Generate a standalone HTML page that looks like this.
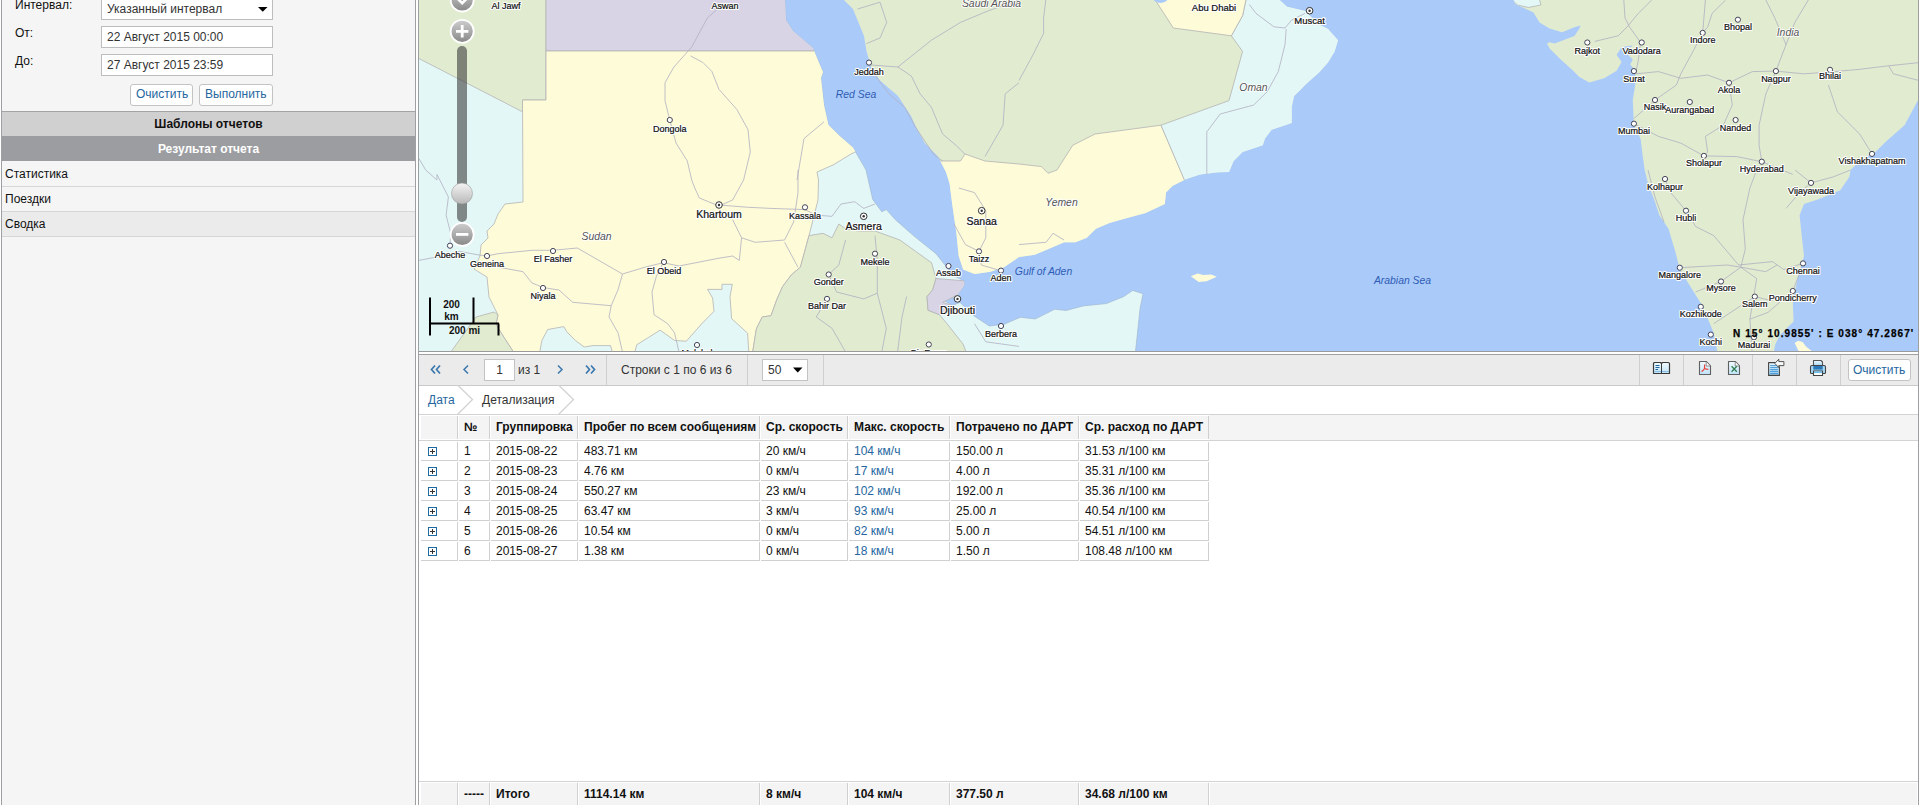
<!DOCTYPE html>
<html><head><meta charset="utf-8">
<style>
*{box-sizing:border-box;margin:0;padding:0}
html,body{width:1919px;height:805px;overflow:hidden;background:#fff;font-family:"Liberation Sans",sans-serif;font-size:12px;color:#111}
.a{position:absolute;white-space:nowrap;line-height:14px}
.box{position:absolute}
.b{font-weight:bold}
.blue{color:#2566a0}
</style></head><body>
<!-- LEFT PANEL -->
<div class="box" style="left:0;top:0;width:416px;height:805px;background:#f5f5f5;border-left:1px solid #9d9fa3;border-right:1px solid #9d9fa3;left:1px;width:415px"></div>
<div class="a" style="left:15px;top:-2px">Интервал:</div>
<div class="box" style="left:101px;top:-2px;width:172px;height:22px;background:#fff;border:1px solid #bdbdbd"></div>
<div class="a" style="left:107px;top:2px;color:#333">Указанный интервал</div>
<svg class="box" style="left:258px;top:7px" width="10" height="5"><path d="M0 0H9.5L4.75 4.8Z" fill="#000"/></svg>
<div class="a" style="left:15px;top:26px">От:</div>
<div class="box" style="left:101px;top:26px;width:172px;height:22px;background:#fff;border:1px solid #bdbdbd"></div>
<div class="a" style="left:107px;top:30px;color:#333">22 Август 2015 00:00</div>
<div class="a" style="left:15px;top:54px">До:</div>
<div class="box" style="left:101px;top:54px;width:172px;height:22px;background:#fff;border:1px solid #bdbdbd"></div>
<div class="a" style="left:107px;top:58px;color:#333">27 Август 2015 23:59</div>
<div class="box" style="left:130px;top:84px;width:63px;height:22px;background:#fff;border:1px solid #c3c3c3;border-radius:3px"></div>
<div class="a blue" style="left:136px;top:87px">Очистить</div>
<div class="box" style="left:199px;top:84px;width:74px;height:22px;background:#fff;border:1px solid #c3c3c3;border-radius:3px"></div>
<div class="a blue" style="left:205px;top:87px">Выполнить</div>
<div class="box" style="left:2px;top:111px;width:413px;height:1px;background:#a3a3a3"></div>
<div class="box" style="left:2px;top:112px;width:413px;height:24px;background:#d1d0d1"></div>
<div class="a b" style="left:2px;width:413px;text-align:center;top:117px">Шаблоны отчетов</div>
<div class="box" style="left:2px;top:136px;width:413px;height:25px;background:#9c9da1"></div>
<div class="a b" style="left:2px;width:413px;text-align:center;top:142px;color:#fff">Результат отчета</div>
<div class="box" style="left:2px;top:161px;width:413px;height:26px;border-bottom:1px solid #d6d6d6"></div>
<div class="a" style="left:5px;top:167px">Статистика</div>
<div class="box" style="left:2px;top:187px;width:413px;height:25px;border-bottom:1px solid #d6d6d6"></div>
<div class="a" style="left:5px;top:192px">Поездки</div>
<div class="box" style="left:2px;top:212px;width:413px;height:25px;background:#ebebeb;border-bottom:1px solid #d6d6d6"></div>
<div class="a" style="left:5px;top:217px">Сводка</div>

<!-- RIGHT PANEL BORDER -->
<div class="box" style="left:418px;top:0;width:1px;height:805px;background:#9d9fa3"></div>
<div class="box" style="left:1918px;top:0px;width:1px;height:805px;background:#9d9fa3"></div>

<!-- MAP -->
<div class="box" id="map" style="left:419px;top:0;width:1499px;height:351px;background:#aacbfa;overflow:hidden">
<svg width="1500" height="351" viewBox="0 0 1500 351" style="position:absolute;left:0;top:0">
<defs>
<clipPath id="cAf"><path d="M-5.0 -5.0 L366.0 -5.0 L366.0 0.0 L367.0 20.0 L374.0 31.0 L394.0 48.0 L398.0 58.0 L404.0 72.0 L402.0 78.0 L405.0 105.0 L409.5 125.0 L420.7 136.0 L434.0 147.5 L443.0 163.0 L447.0 170.0 L453.7 199.4 L462.8 211.8 L467.3 209.6 L476.4 219.7 L494.4 235.6 L517.0 253.7 L526.0 265.0 L535.0 276.0 L545.0 280.8 L545.3 285.3 L537.4 296.6 L526.0 301.0 L533.0 305.6 L541.0 302.4 L555.4 316.2 L570.3 326.0 L585.2 324.2 L601.3 317.3 L616.2 319.0 L635.7 309.3 L647.1 310.5 L664.3 305.9 L687.3 303.6 L704.5 296.7 L713.7 290.4 L724.0 293.8 L721.1 308.2 L716.0 356.0 L-5.0 356.0 Z"/></clipPath>
<clipPath id="cAr"><path d="M425.0 -5.0 L425.0 0.0 L434.0 9.0 L445.0 36.0 L447.5 51.0 L452.0 67.0 L461.0 80.5 L479.0 96.0 L492.0 116.0 L497.0 127.0 L505.7 143.0 L519.0 156.5 L527.0 172.0 L530.6 183.6 L532.9 201.7 L537.4 233.3 L539.7 256.0 L544.2 269.5 L555.5 274.0 L571.3 271.7 L585.0 267.2 L600.0 257.0 L615.8 254.8 L629.4 249.1 L645.2 242.3 L656.5 242.3 L667.8 237.8 L676.9 228.8 L690.4 223.0 L706.3 218.6 L726.6 213.0 L745.8 204.0 L747.0 192.6 L753.7 185.8 L767.3 179.0 L781.0 174.5 L799.0 172.3 L810.0 172.0 L814.6 161.0 L823.6 152.0 L843.7 145.3 L846.0 138.6 L852.6 129.7 L872.7 123.0 L872.7 107.3 L875.0 96.0 L881.7 89.4 L886.0 85.0 L900.0 72.5 L909.0 62.6 L915.6 51.4 L919.0 40.2 L909.0 29.0 L900.0 24.6 L886.0 11.0 L868.0 6.7 L855.0 -5.0 Z"/></clipPath>
<clipPath id="cIn"><path d="M1092.3 -5.0 L1505.0 -5.0 L1505.0 98.4 L1500.0 98.4 L1485.5 125.2 L1467.6 141.0 L1456.4 152.0 L1440.8 161.0 L1431.5 170.0 L1430.4 176.8 L1421.3 190.3 L1398.7 199.4 L1385.0 204.0 L1380.6 215.2 L1382.9 237.8 L1385.0 256.0 L1378.4 278.5 L1373.8 303.4 L1374.6 321.4 L1367.8 328.3 L1361.0 335.0 L1356.3 344.2 L1354.0 356.0 L1299.2 356.0 L1294.7 332.8 L1283.4 305.7 L1272.0 287.6 L1260.8 269.5 L1256.3 251.4 L1249.5 228.8 L1240.4 215.2 L1236.0 201.7 L1229.0 183.6 L1225.7 170.0 L1223.8 156.6 L1221.6 138.7 L1214.9 125.2 L1213.8 100.0 L1216.3 84.5 L1216.3 70.8 L1211.3 64.6 L1213.8 59.6 L1208.8 54.7 L1210.0 48.4 L1213.8 45.3 L1202.6 47.2 L1197.6 54.7 L1202.6 62.1 L1197.6 70.8 L1185.2 78.3 L1170.3 82.6 L1160.4 77.0 L1152.9 69.6 L1141.7 59.6 L1130.6 48.4 L1128.0 43.5 L1130.6 42.2 L1135.5 43.5 L1145.5 39.8 L1155.4 36.0 L1160.4 28.6 L1161.6 25.5 L1155.4 27.3 L1143.0 32.3 L1130.6 28.6 L1120.6 22.4 L1114.4 12.4 L1105.0 8.0 L1096.7 4.5 Z"/></clipPath>
<linearGradient id="zb" x1="0" y1="0" x2="0" y2="1"><stop offset="0" stop-color="#cfcfcf"/><stop offset="1" stop-color="#878787"/></linearGradient>
<linearGradient id="kn" x1="0" y1="0" x2="0" y2="1"><stop offset="0" stop-color="#f4f4f4"/><stop offset="1" stop-color="#b8b8b8"/></linearGradient>
</defs>
<rect width="1500" height="351" fill="#aacbfa"/>
<path d="M-5.0 -5.0 L366.0 -5.0 L366.0 0.0 L367.0 20.0 L374.0 31.0 L394.0 48.0 L398.0 58.0 L404.0 72.0 L402.0 78.0 L405.0 105.0 L409.5 125.0 L420.7 136.0 L434.0 147.5 L443.0 163.0 L447.0 170.0 L453.7 199.4 L462.8 211.8 L467.3 209.6 L476.4 219.7 L494.4 235.6 L517.0 253.7 L526.0 265.0 L535.0 276.0 L545.0 280.8 L545.3 285.3 L537.4 296.6 L526.0 301.0 L533.0 305.6 L541.0 302.4 L555.4 316.2 L570.3 326.0 L585.2 324.2 L601.3 317.3 L616.2 319.0 L635.7 309.3 L647.1 310.5 L664.3 305.9 L687.3 303.6 L704.5 296.7 L713.7 290.4 L724.0 293.8 L721.1 308.2 L716.0 356.0 L-5.0 356.0 Z" fill="#e4f7f7" stroke="#9db3c8" stroke-width="0.6"/>
<g clip-path="url(#cAf)">
<path d="M-5.0 -5.0 L127.0 -5.0 L127.0 100.0 L103.5 100.0 L103.5 111.8 L-5.0 56.0 Z" fill="#e1ebd0" stroke="#b4b4b4" stroke-width="0.8"/>
<path d="M127.0 -5.0 L400.0 -5.0 L400.0 51.0 L127.0 51.0 Z" fill="#d8d4e6" stroke="#b4b4b4" stroke-width="0.8"/>
<path d="M103.5 100.0 L127.0 100.0 L127.0 51.0 L400.0 51.0 L440.0 150.0 L432.0 154.0 L414.0 165.0 L398.0 172.0 L399.5 180.0 L399.0 200.0 L390.0 235.6 L381.4 267.2 L372.4 274.8 L363.6 286.5 L357.8 299.6 L352.0 315.7 L343.2 317.0 L337.4 328.8 L333.0 356.0 L97.0 356.0 L79.0 328.0 L77.0 324.0 L79.0 315.0 L70.0 297.0 L68.0 277.0 L55.0 269.0 L61.0 256.0 L62.0 245.0 L69.0 238.0 L68.0 231.0 L75.0 224.0 L79.0 214.0 L86.0 204.0 L104.0 202.0 Z" fill="#fefbd8" stroke="#b4b4b4" stroke-width="0.8"/>
<path d="M120.0 356.0 L122.9 340.5 L128.7 329.5 L144.8 326.6 L147.7 331.7 L156.4 340.5 L165.2 347.0 L174.0 345.6 L191.5 345.6 L194.4 356.0 Z" fill="#e4f7f7" stroke="#b4b4b4" stroke-width="0.8"/>
<path d="M214.8 356.0 L217.7 344.8 L229.4 337.5 L241.0 330.2 L255.7 340.5 L267.3 341.2 L283.4 323.0 L295.0 311.3 L293.6 298.0 L288.5 289.4 L303.0 289.4 L303.0 284.3 L313.3 284.3 L311.0 296.7 L312.6 318.6 L328.6 333.2 L330.0 356.0 Z" fill="#e4f7f7" stroke="#b4b4b4" stroke-width="0.8"/>
<path d="M29.0 356.0 L57.0 317.0 L75.0 312.0 L79.0 315.0 L77.0 324.0 L79.0 328.0 L97.0 356.0 Z" fill="#e1ebd0" stroke="#b4b4b4" stroke-width="0.8"/>
<path d="M390.0 235.6 L404.0 233.3 L413.0 237.8 L419.8 224.0 L426.6 228.8 L440.0 231.0 L456.0 231.0 L480.9 240.0 L496.7 251.4 L512.5 262.7 L517.0 278.5 L513.7 289.8 L508.0 296.6 L509.0 310.2 L520.4 314.7 L528.0 323.7 L544.0 344.0 L548.7 356.0 L333.0 356.0 L337.4 328.8 L343.2 317.0 L352.0 315.7 L357.8 299.6 L363.6 286.5 L372.4 274.8 L381.4 267.2 Z" fill="#e1ebd0" stroke="#b4b4b4" stroke-width="0.8"/>
<path d="M517.0 278.5 L545.3 280.8 L560.0 286.4 L535.0 296.6 L523.8 302.3 L533.0 305.6 L539.7 310.2 L520.4 314.7 L509.0 310.2 L508.0 296.6 L513.7 289.8 Z" fill="#d8d4e6" stroke="#b4b4b4" stroke-width="0.8"/>
</g>
<path d="M425.0 -5.0 L425.0 0.0 L434.0 9.0 L445.0 36.0 L447.5 51.0 L452.0 67.0 L461.0 80.5 L479.0 96.0 L492.0 116.0 L497.0 127.0 L505.7 143.0 L519.0 156.5 L527.0 172.0 L530.6 183.6 L532.9 201.7 L537.4 233.3 L539.7 256.0 L544.2 269.5 L555.5 274.0 L571.3 271.7 L585.0 267.2 L600.0 257.0 L615.8 254.8 L629.4 249.1 L645.2 242.3 L656.5 242.3 L667.8 237.8 L676.9 228.8 L690.4 223.0 L706.3 218.6 L726.6 213.0 L745.8 204.0 L747.0 192.6 L753.7 185.8 L767.3 179.0 L781.0 174.5 L799.0 172.3 L810.0 172.0 L814.6 161.0 L823.6 152.0 L843.7 145.3 L846.0 138.6 L852.6 129.7 L872.7 123.0 L872.7 107.3 L875.0 96.0 L881.7 89.4 L886.0 85.0 L900.0 72.5 L909.0 62.6 L915.6 51.4 L919.0 40.2 L909.0 29.0 L900.0 24.6 L886.0 11.0 L868.0 6.7 L855.0 -5.0 Z" fill="#e1ebd0"/>
<g clip-path="url(#cAr)">
<path d="M480.0 161.0 L541.5 161.0 L546.0 154.0 L566.0 161.0 L600.0 164.0 L622.4 166.6 L629.0 173.3 L638.0 170.0 L653.7 145.3 L676.0 134.0 L742.0 125.2 L770.0 190.0 L770.0 320.0 L480.0 320.0 Z" fill="#fefbd8" stroke="#b4b4b4" stroke-width="0.8"/>
<path d="M742.0 125.2 L810.0 100.6 L823.6 51.4 L812.4 35.8 L823.6 15.6 L828.0 -5.0 L950.0 -5.0 L950.0 220.0 L770.0 220.0 L765.4 180.0 Z" fill="#e4f7f7" stroke="#b4b4b4" stroke-width="0.8"/>
<path d="M733.0 -5.0 L754.3 28.0 L812.4 35.8 L823.6 15.6 L828.0 -5.0 Z" fill="#fefbd8" stroke="#b4b4b4" stroke-width="0.8"/>
</g>
<path d="M1092.3 -5.0 L1505.0 -5.0 L1505.0 98.4 L1500.0 98.4 L1485.5 125.2 L1467.6 141.0 L1456.4 152.0 L1440.8 161.0 L1431.5 170.0 L1430.4 176.8 L1421.3 190.3 L1398.7 199.4 L1385.0 204.0 L1380.6 215.2 L1382.9 237.8 L1385.0 256.0 L1378.4 278.5 L1373.8 303.4 L1374.6 321.4 L1367.8 328.3 L1361.0 335.0 L1356.3 344.2 L1354.0 356.0 L1299.2 356.0 L1294.7 332.8 L1283.4 305.7 L1272.0 287.6 L1260.8 269.5 L1256.3 251.4 L1249.5 228.8 L1240.4 215.2 L1236.0 201.7 L1229.0 183.6 L1225.7 170.0 L1223.8 156.6 L1221.6 138.7 L1214.9 125.2 L1213.8 100.0 L1216.3 84.5 L1216.3 70.8 L1211.3 64.6 L1213.8 59.6 L1208.8 54.7 L1210.0 48.4 L1213.8 45.3 L1202.6 47.2 L1197.6 54.7 L1202.6 62.1 L1197.6 70.8 L1185.2 78.3 L1170.3 82.6 L1160.4 77.0 L1152.9 69.6 L1141.7 59.6 L1130.6 48.4 L1128.0 43.5 L1130.6 42.2 L1135.5 43.5 L1145.5 39.8 L1155.4 36.0 L1160.4 28.6 L1161.6 25.5 L1155.4 27.3 L1143.0 32.3 L1130.6 28.6 L1120.6 22.4 L1114.4 12.4 L1105.0 8.0 L1096.7 4.5 Z" fill="#e1ebd0"/>
<g clip-path="url(#cIn)">
<path d="M1085.0 -5.0 L1093.3 -5.0 L1093.3 0.0 L1098.3 5.0 L1109.4 7.5 L1121.9 5.0 L1120.6 0.0 L1120.6 -5.0 Z" fill="#e4f7f7" stroke="#b4b4b4" stroke-width="0.8"/>
</g>
<path d="M733 -2 Q736 3 742 3 Q748 2 750 -2 Z" fill="#aacbfa"/>
<path d="M771.8 276.3 L778.6 273.5 L784.3 275.0 L792.2 274.5 L797.8 276.7 L787.7 281.2 L779.7 282.0 Z" fill="#fefbd8"/>
<path d="M1375.7 343.0 L1379.0 340.8 L1383.7 342.0 L1387.0 346.5 L1394.0 352.0 L1380.0 352.0 Z" fill="#fefbd8"/>
<g fill="none" stroke="#b0b0c0" stroke-width="0.8">
<path d="M300.0 7.8 L288.4 17.9 L272.7 47.0 L254.9 67.0 L246.0 82.7 L246.0 100.6 L250.4 118.5 L257.0 143.0 L268.3 161.0 L272.7 180.0 L275.8 188.0 L280.4 198.0 L289.4 201.7 L300.0 206.0"/>
<path d="M271.6 55.9 L284.0 62.6 L292.9 71.5 L300.0 89.4 L317.9 109.5 L329.0 129.7 L331.3 152.0 L324.6 180.0 L313.6 200.0 L300.0 206.0"/>
<path d="M0.0 158.7 L6.7 170.0 L17.9 180.0 L18.0 174.5"/>
<path d="M378.0 180.0 L385.0 138.6 L405.0 121.8"/>
<path d="M438.6 9.0 L461.0 2.2 L467.7 22.4 L461.0 38.0 L447.5 43.6"/>
<path d="M449.8 64.8 L478.9 67.0 L492.3 76.0 L501.2 93.9 L512.4 107.3 L523.6 134.0 L537.0 145.3 L546.0 154.3"/>
<path d="M478.9 67.0 L512.4 40.2 L541.5 22.4 L568.3 11.2 L600.0 0.0"/>
<path d="M600.0 82.7 L586.2 93.9 L584.0 125.2 L566.0 156.5"/>
<path d="M456.5 76.0 L470.0 93.9 L485.6 107.3 L496.7 127.4 L514.6 154.3 L523.6 161.0"/>
<path d="M18.0 174.5 L29.4 197.0 L27.1 215.2 L31.7 233.3 L31.0 245.0"/>
<path d="M0.0 260.4 L22.6 256.0 L40.7 251.4 L58.8 254.8 L67.8 256.0 L79.0 253.7 L113.0 250.3 L133.4 250.3 L158.3 248.0 L203.5 274.0 L226.0 267.2 L244.2 262.7 L260.0 266.0 L300.0 258.2 L313.6 256.0 L320.3 260.4 L322.6 237.8"/>
<path d="M67.8 265.0 L104.0 271.7 L113.0 283.0 L124.4 287.6 L140.0 290.0 L153.7 302.3 L192.2 305.7"/>
<path d="M203.5 274.0 L199.0 289.8 L192.2 305.7 L190.0 317.0 L199.0 332.8 L203.5 352.0"/>
<path d="M244.2 262.7 L237.4 276.3 L233.0 292.0 L235.0 314.7 L248.7 323.7 L255.5 332.8 L260.0 352.0"/>
<path d="M300.0 205.0 L329.4 207.3 L352.0 208.4 L386.0 209.6 L397.2 215.2 L413.0 216.3 L422.0 204.0 L435.7 201.7 L444.7 208.4 L456.0 204.0"/>
<path d="M313.6 219.7 L322.6 237.8 L336.2 242.3 L365.6 240.0 L374.6 222.0 L379.0 192.6 L379.0 170.0"/>
<path d="M365.6 242.3 L379.0 267.2"/>
<path d="M426.6 240.0 L419.8 265.0 L409.7 274.5 L417.6 292.0 L444.7 298.9 L458.3 293.2"/>
<path d="M456.0 235.6 L458.3 260.4 L458.3 293.2 L467.3 328.3 L462.8 352.0"/>
<path d="M408.0 298.9 L397.2 317.0 L413.0 328.3 L426.6 352.0"/>
<path d="M487.6 296.6 L483.0 317.0 L478.6 352.0"/>
<path d="M539.7 188.0 L555.5 192.6 L566.8 210.7 L566.8 237.8 L560.0 251.4 L562.3 265.0 L585.0 271.7"/>
<path d="M535.0 224.0 L546.4 244.6 L560.0 251.4"/>
<path d="M555.5 323.7 L566.8 341.8 L600.0 346.4"/>
<path d="M626.8 0.0 L624.6 17.9 L624.6 33.5 L613.4 55.9 L600.0 80.5"/>
<path d="M830.3 4.5 L837.0 13.4 L854.9 26.8 L866.0 28.0 L872.7 20.0 L886.0 13.4"/>
<path d="M867.2 29.0 L866.0 44.7 L859.3 71.5 L848.2 91.7 L834.7 105.0 L801.2 114.0 L787.8 131.9 L787.8 174.4"/>
<path d="M600.0 244.6 L627.0 242.3 L634.0 233.3 L645.0 240.0"/>
<path d="M1175.7 41.4 L1199.2 35.8 L1208.2 26.8 L1219.3 13.4 L1232.8 0.0"/>
<path d="M1204.8 0.0 L1206.0 17.9 L1210.4 26.8 L1221.6 42.5 L1219.3 60.4 L1217.0 71.6"/>
<path d="M1217.0 73.8 L1239.5 71.6 L1261.8 78.3 L1288.7 75.0 L1310.0 82.8 L1333.4 71.6 L1356.9 71.1 L1384.8 73.8 L1411.0 72.0 L1440.8 69.3 L1467.6 66.0 L1500.0 62.6"/>
<path d="M1286.4 0.0 L1283.7 32.9 L1275.2 49.2 L1261.8 73.8 L1257.4 85.0 L1236.0 100.0 L1214.9 118.5"/>
<path d="M1306.6 0.0 L1293.1 13.4 L1288.7 26.8 L1283.7 32.9"/>
<path d="M1346.8 0.0 L1355.8 17.9 L1367.0 44.7 L1356.9 71.1 L1346.8 94.0 L1340.1 125.2 L1340.1 145.4 L1342.8 161.7"/>
<path d="M1389.3 0.0 L1375.9 22.4 L1367.0 44.7"/>
<path d="M1310.0 82.8 L1313.3 105.0 L1304.3 125.2 L1286.4 136.4 L1288.7 152.0 L1284.9 155.9"/>
<path d="M1214.9 123.7 L1239.5 136.4 L1261.8 143.1 L1284.9 155.9 L1317.7 156.6 L1342.8 161.7 L1373.7 174.4"/>
<path d="M1409.4 85.0 L1418.4 111.8 L1440.8 134.2 L1453.0 153.9"/>
<path d="M1469.8 66.0 L1474.3 73.8 L1500.0 80.5"/>
<path d="M1337.7 170.0 L1330.9 188.0 L1324.0 219.7 L1326.3 249.1 L1321.8 267.2 L1337.7 278.5 L1330.9 319.2 L1333.1 352.0"/>
<path d="M1266.9 210.7 L1276.6 226.5 L1294.7 235.6 L1319.6 265.0 L1353.5 261.6 L1364.8 269.5 L1384.0 263.4"/>
<path d="M1260.8 267.7 L1308.3 265.0 L1321.8 267.2"/>
<path d="M1276.6 292.0 L1302.0 281.5 L1321.8 267.2 L1346.7 271.7 L1358.0 265.0"/>
<path d="M1294.7 323.7 L1321.8 305.7 L1335.8 296.6 L1353.5 301.0"/>
<path d="M1382.9 267.2 L1373.8 291.0 L1349.0 312.4 L1330.9 319.2"/>
<path d="M1246.0 179.0 L1251.7 192.6 L1266.9 210.7"/>
<path d="M1229.0 170.0 L1236.0 197.0 L1245.0 222.0"/>
<path d="M1392.0 182.9 L1380.6 192.6 L1367.0 208.4"/>
<path d="M1376.0 170.0 L1392.0 182.9 L1414.5 176.8 L1431.5 170.0"/>
</g>
<g>
<circle cx="250.8" cy="120" r="2.6" fill="#fff" stroke="#444458" stroke-width="1"/>
<circle cx="300" cy="205" r="3.3" fill="#fff" stroke="#333" stroke-width="1"/><circle cx="300" cy="205" r="1.2" fill="#333"/>
<circle cx="386" cy="207.3" r="2.6" fill="#fff" stroke="#444458" stroke-width="1"/>
<circle cx="444.7" cy="216.3" r="3.3" fill="#fff" stroke="#333" stroke-width="1"/><circle cx="444.7" cy="216.3" r="1.2" fill="#333"/>
<circle cx="456" cy="253.7" r="2.6" fill="#fff" stroke="#444458" stroke-width="1"/>
<circle cx="409.7" cy="274.5" r="2.6" fill="#fff" stroke="#444458" stroke-width="1"/>
<circle cx="408" cy="298.9" r="2.6" fill="#fff" stroke="#444458" stroke-width="1"/>
<circle cx="529.5" cy="266" r="2.6" fill="#fff" stroke="#444458" stroke-width="1"/>
<circle cx="538.5" cy="298.9" r="3.3" fill="#fff" stroke="#333" stroke-width="1"/><circle cx="538.5" cy="298.9" r="1.2" fill="#333"/>
<circle cx="562.7" cy="210.7" r="3.3" fill="#fff" stroke="#333" stroke-width="1"/><circle cx="562.7" cy="210.7" r="1.2" fill="#333"/>
<circle cx="560" cy="251.4" r="2.6" fill="#fff" stroke="#444458" stroke-width="1"/>
<circle cx="582" cy="270.6" r="2.6" fill="#fff" stroke="#444458" stroke-width="1"/>
<circle cx="582" cy="326" r="2.6" fill="#fff" stroke="#444458" stroke-width="1"/>
<circle cx="450" cy="62.6" r="2.6" fill="#fff" stroke="#444458" stroke-width="1"/>
<circle cx="31" cy="245.7" r="2.6" fill="#fff" stroke="#444458" stroke-width="1"/>
<circle cx="68" cy="256" r="2.6" fill="#fff" stroke="#444458" stroke-width="1"/>
<circle cx="134" cy="251" r="2.6" fill="#fff" stroke="#444458" stroke-width="1"/>
<circle cx="124" cy="288" r="2.6" fill="#fff" stroke="#444458" stroke-width="1"/>
<circle cx="245" cy="262" r="2.6" fill="#fff" stroke="#444458" stroke-width="1"/>
<circle cx="890.6" cy="10.7" r="3.3" fill="#fff" stroke="#333" stroke-width="1"/><circle cx="890.6" cy="10.7" r="1.2" fill="#333"/>
<circle cx="1168.3" cy="42.5" r="2.6" fill="#fff" stroke="#444458" stroke-width="1"/>
<circle cx="1222.7" cy="42.5" r="2.6" fill="#fff" stroke="#444458" stroke-width="1"/>
<circle cx="1283.7" cy="32.9" r="2.6" fill="#fff" stroke="#444458" stroke-width="1"/>
<circle cx="1318.9" cy="19.7" r="2.6" fill="#fff" stroke="#444458" stroke-width="1"/>
<circle cx="1214.9" cy="71.1" r="2.6" fill="#fff" stroke="#444458" stroke-width="1"/>
<circle cx="1310" cy="82.8" r="2.6" fill="#fff" stroke="#444458" stroke-width="1"/>
<circle cx="1356.9" cy="71.1" r="2.6" fill="#fff" stroke="#444458" stroke-width="1"/>
<circle cx="1411" cy="69.8" r="2.6" fill="#fff" stroke="#444458" stroke-width="1"/>
<circle cx="1236" cy="100" r="2.6" fill="#fff" stroke="#444458" stroke-width="1"/>
<circle cx="1270.8" cy="102" r="2.6" fill="#fff" stroke="#444458" stroke-width="1"/>
<circle cx="1316.6" cy="120" r="2.6" fill="#fff" stroke="#444458" stroke-width="1"/>
<circle cx="1214.9" cy="123.7" r="2.6" fill="#fff" stroke="#444458" stroke-width="1"/>
<circle cx="1284.9" cy="155.9" r="2.6" fill="#fff" stroke="#444458" stroke-width="1"/>
<circle cx="1342.8" cy="161.7" r="2.6" fill="#fff" stroke="#444458" stroke-width="1"/>
<circle cx="1453" cy="153.9" r="2.6" fill="#fff" stroke="#444458" stroke-width="1"/>
<circle cx="1246" cy="179" r="2.6" fill="#fff" stroke="#444458" stroke-width="1"/>
<circle cx="1392" cy="182.9" r="2.6" fill="#fff" stroke="#444458" stroke-width="1"/>
<circle cx="1267" cy="210.7" r="2.6" fill="#fff" stroke="#444458" stroke-width="1"/>
<circle cx="1260.8" cy="267.7" r="2.6" fill="#fff" stroke="#444458" stroke-width="1"/>
<circle cx="1384" cy="263.4" r="2.6" fill="#fff" stroke="#444458" stroke-width="1"/>
<circle cx="1302" cy="281.5" r="2.6" fill="#fff" stroke="#444458" stroke-width="1"/>
<circle cx="1373.8" cy="291" r="2.6" fill="#fff" stroke="#444458" stroke-width="1"/>
<circle cx="1335.8" cy="296.6" r="2.6" fill="#fff" stroke="#444458" stroke-width="1"/>
<circle cx="1281.8" cy="306.8" r="2.6" fill="#fff" stroke="#444458" stroke-width="1"/>
<circle cx="1291.8" cy="334.6" r="2.6" fill="#fff" stroke="#444458" stroke-width="1"/>
<circle cx="1335" cy="337.3" r="2.6" fill="#fff" stroke="#444458" stroke-width="1"/>
<circle cx="509.8" cy="344.5" r="2.6" fill="#fff" stroke="#444458" stroke-width="1"/>
<circle cx="278" cy="345" r="2.6" fill="#fff" stroke="#444458" stroke-width="1"/>
</g>
<g font-family="Liberation Sans" fill="#fff" stroke="#fff" stroke-width="2.2" stroke-linejoin="round" text-anchor="middle">
<text x="250.8" y="131.6" font-size="9">Dongola</text>
<text x="300" y="218.1" font-size="10.5">Khartoum</text>
<text x="386" y="218.6" font-size="9">Kassala</text>
<text x="444.7" y="229.79999999999998" font-size="10.5">Asmera</text>
<text x="456" y="264.6" font-size="9">Mekele</text>
<text x="409.7" y="284.6" font-size="9">Gonder</text>
<text x="408" y="309.1" font-size="9">Bahir Dar</text>
<text x="529.5" y="275.6" font-size="9">Assab</text>
<text x="538.5" y="313.6" font-size="10.5">Djibouti</text>
<text x="562.7" y="225.1" font-size="10.5">Sanaa</text>
<text x="560" y="261.6" font-size="9">Taizz</text>
<text x="582" y="280.6" font-size="9">Aden</text>
<text x="582" y="336.6" font-size="9">Berbera</text>
<text x="450" y="74.6" font-size="9">Jeddah</text>
<text x="31" y="257.6" font-size="9">Abeche</text>
<text x="68" y="267.1" font-size="9">Geneina</text>
<text x="134" y="262.1" font-size="9">El Fasher</text>
<text x="124" y="299.1" font-size="9">Niyala</text>
<text x="245" y="273.6" font-size="9">El Obeid</text>
<text x="890.6" y="24.1" font-size="9.5">Muscat</text>
<text x="1168.3" y="54.300000000000004" font-size="9">Rajkot</text>
<text x="1222.7" y="54.300000000000004" font-size="9">Vadodara</text>
<text x="1283.7" y="43.1" font-size="9">Indore</text>
<text x="1318.9" y="30.3" font-size="9">Bhopal</text>
<text x="1214.9" y="81.6" font-size="9">Surat</text>
<text x="1310" y="93.39999999999999" font-size="9">Akola</text>
<text x="1356.9" y="81.6" font-size="9">Nagpur</text>
<text x="1411" y="79.1" font-size="9">Bhilai</text>
<text x="1236" y="110.19999999999999" font-size="9">Nasik</text>
<text x="1270.8" y="112.6" font-size="9">Aurangabad</text>
<text x="1316.6" y="130.6" font-size="9">Nanded</text>
<text x="1214.9" y="133.6" font-size="9">Mumbai</text>
<text x="1284.9" y="166.29999999999998" font-size="9">Sholapur</text>
<text x="1342.8" y="172.1" font-size="9">Hyderabad</text>
<text x="1453" y="163.6" font-size="9">Vishakhapatnam</text>
<text x="1246" y="189.79999999999998" font-size="9">Kolhapur</text>
<text x="1392" y="193.6" font-size="9">Vijayawada</text>
<text x="1267" y="221.2" font-size="9">Hubli</text>
<text x="1260.8" y="278.0" font-size="9">Mangalore</text>
<text x="1384" y="273.5" font-size="9">Chennai</text>
<text x="1302" y="291.40000000000003" font-size="9">Mysore</text>
<text x="1373.8" y="301.3" font-size="9">Pondicherry</text>
<text x="1335.8" y="306.6" font-size="9">Salem</text>
<text x="1281.8" y="317.1" font-size="9">Kozhikode</text>
<text x="1291.8" y="344.6" font-size="9">Kochi</text>
<text x="1335" y="348.20000000000005" font-size="9">Madurai</text>
<text x="87" y="8.6" font-size="9">Al Jawf</text>
<text x="306" y="8.6" font-size="9">Aswan</text>
<text x="795" y="10.6" font-size="9.5">Abu Dhabi</text>
<text x="510" y="356.1" font-size="9">Bir Rawa</text>
<text x="278" y="356.1" font-size="9">Malakal</text>
</g>
<g font-family="Liberation Sans" fill="#111" stroke="#111" stroke-width="0.22" text-anchor="middle">
<text x="250.8" y="131.6" font-size="9">Dongola</text>
<text x="300" y="218.1" font-size="10.5">Khartoum</text>
<text x="386" y="218.6" font-size="9">Kassala</text>
<text x="444.7" y="229.79999999999998" font-size="10.5">Asmera</text>
<text x="456" y="264.6" font-size="9">Mekele</text>
<text x="409.7" y="284.6" font-size="9">Gonder</text>
<text x="408" y="309.1" font-size="9">Bahir Dar</text>
<text x="529.5" y="275.6" font-size="9">Assab</text>
<text x="538.5" y="313.6" font-size="10.5">Djibouti</text>
<text x="562.7" y="225.1" font-size="10.5">Sanaa</text>
<text x="560" y="261.6" font-size="9">Taizz</text>
<text x="582" y="280.6" font-size="9">Aden</text>
<text x="582" y="336.6" font-size="9">Berbera</text>
<text x="450" y="74.6" font-size="9">Jeddah</text>
<text x="31" y="257.6" font-size="9">Abeche</text>
<text x="68" y="267.1" font-size="9">Geneina</text>
<text x="134" y="262.1" font-size="9">El Fasher</text>
<text x="124" y="299.1" font-size="9">Niyala</text>
<text x="245" y="273.6" font-size="9">El Obeid</text>
<text x="890.6" y="24.1" font-size="9.5">Muscat</text>
<text x="1168.3" y="54.300000000000004" font-size="9">Rajkot</text>
<text x="1222.7" y="54.300000000000004" font-size="9">Vadodara</text>
<text x="1283.7" y="43.1" font-size="9">Indore</text>
<text x="1318.9" y="30.3" font-size="9">Bhopal</text>
<text x="1214.9" y="81.6" font-size="9">Surat</text>
<text x="1310" y="93.39999999999999" font-size="9">Akola</text>
<text x="1356.9" y="81.6" font-size="9">Nagpur</text>
<text x="1411" y="79.1" font-size="9">Bhilai</text>
<text x="1236" y="110.19999999999999" font-size="9">Nasik</text>
<text x="1270.8" y="112.6" font-size="9">Aurangabad</text>
<text x="1316.6" y="130.6" font-size="9">Nanded</text>
<text x="1214.9" y="133.6" font-size="9">Mumbai</text>
<text x="1284.9" y="166.29999999999998" font-size="9">Sholapur</text>
<text x="1342.8" y="172.1" font-size="9">Hyderabad</text>
<text x="1453" y="163.6" font-size="9">Vishakhapatnam</text>
<text x="1246" y="189.79999999999998" font-size="9">Kolhapur</text>
<text x="1392" y="193.6" font-size="9">Vijayawada</text>
<text x="1267" y="221.2" font-size="9">Hubli</text>
<text x="1260.8" y="278.0" font-size="9">Mangalore</text>
<text x="1384" y="273.5" font-size="9">Chennai</text>
<text x="1302" y="291.40000000000003" font-size="9">Mysore</text>
<text x="1373.8" y="301.3" font-size="9">Pondicherry</text>
<text x="1335.8" y="306.6" font-size="9">Salem</text>
<text x="1281.8" y="317.1" font-size="9">Kozhikode</text>
<text x="1291.8" y="344.6" font-size="9">Kochi</text>
<text x="1335" y="348.20000000000005" font-size="9">Madurai</text>
<text x="87" y="8.6" font-size="9">Al Jawf</text>
<text x="306" y="8.6" font-size="9">Aswan</text>
<text x="795" y="10.6" font-size="9.5">Abu Dhabi</text>
<text x="510" y="356.1" font-size="9">Bir Rawa</text>
<text x="278" y="356.1" font-size="9">Malakal</text>
</g>
<g font-family="Liberation Sans" font-style="italic" stroke="#fff" stroke-width="1.6" stroke-linejoin="round" paint-order="stroke" text-anchor="middle" font-size="10.4">
<text x="177.5" y="240" fill="#555">Sudan</text>
<text x="572.5" y="6.7" fill="#555">Saudi Arabia</text>
<text x="642.5" y="205.7" fill="#555">Yemen</text>
<text x="834.5" y="90.5" fill="#555">Oman</text>
<text x="1369" y="35.8" fill="#555">India</text>
</g>
<g font-family="Liberation Sans" font-style="italic" text-anchor="middle" font-size="10.4" fill="#2f5cb4">
<text x="437" y="98">Red Sea</text>
<text x="624.5" y="275">Gulf of Aden</text>
<text x="983.5" y="284">Arabian Sea</text>
</g>
<g>
<rect x="38" y="46" width="10" height="176" rx="5" fill="#3c3c3c" fill-opacity="0.6"/>
<circle cx="43.2" cy="0" r="11.5" fill="url(#zb)" stroke="#fff" stroke-width="1.8"/>
<path d="M38.5 -1.5L43.2 3.2L47.9 -1.5" stroke="#fff" stroke-width="2.6" fill="none"/>
<circle cx="43.2" cy="31.3" r="11.5" fill="url(#zb)" stroke="#fff" stroke-width="1.8"/>
<path d="M37 31.3H49.4M43.2 25.1V37.5" stroke="#fff" stroke-width="2.8"/>
<circle cx="43" cy="193.5" r="10.5" fill="url(#kn)" stroke="#9a9a9a" stroke-width="0.6"/>
<circle cx="43.2" cy="234.4" r="11.5" fill="url(#zb)" stroke="#fff" stroke-width="1.8"/>
<path d="M37 234.4H49.4" stroke="#fff" stroke-width="2.8"/>
</g>
<g stroke="#000" stroke-width="2" fill="none">
<path d="M11 297.5V335.5M54.5 297.5V323.5M10 323.5H80M79.5 323.5V335.5"/>
</g>
<g font-family="Liberation Sans" font-weight="bold" font-size="10" fill="#111" text-anchor="middle">
<text x="32.5" y="308">200</text><text x="32.5" y="319.5">km</text><text x="45.5" y="334">200 mi</text>
</g>
<text x="1314" y="337" font-family="Liberation Sans" font-weight="bold" font-size="10" letter-spacing="1.08" fill="#000" stroke="#000" stroke-width="0.25">N 15° 10.9855' : E 038° 47.2867'</text>
</svg>
</div>
<div class="box" style="left:419px;top:351px;width:1499px;height:1px;background:#9a9a9a"></div>

<!-- <div class="box" style="left:606px;top:355px;width:1px;height:30px;background:#cfcfcf"></div>
<div class="box" style="left:747px;top:355px;width:1px;height:30px;background:#cfcfcf"></div>
<div class="box" style="left:823px;top:355px;width:1px;height:30px;background:#cfcfcf"></div>
<div class="box" style="left:1639px;top:355px;width:1px;height:30px;background:#cfcfcf"></div>
<div class="box" style="left:1683px;top:355px;width:1px;height:30px;background:#cfcfcf"></div>
<div class="box" style="left:1752px;top:355px;width:1px;height:30px;background:#cfcfcf"></div>
<div class="box" style="left:1796px;top:355px;width:1px;height:30px;background:#cfcfcf"></div>
<div class="box" style="left:1840px;top:355px;width:1px;height:30px;background:#cfcfcf"></div>
<svg class="box" style="left:429px;top:363px" width="13" height="13"><path d="M6 2.5L2.5 6.5L6 10.5M11 2.5L7.5 6.5L11 10.5" stroke="#3b78ae" stroke-width="1.7" fill="none"/></svg>
<svg class="box" style="left:461px;top:363px" width="9" height="13"><path d="M7 2.5L3 6.5L7 10.5" stroke="#3b78ae" stroke-width="1.5" fill="none"/></svg>
<svg class="box" style="left:556px;top:363px" width="9" height="13"><path d="M2 2.5L6 6.5L2 10.5" stroke="#3b78ae" stroke-width="1.5" fill="none"/></svg>
<svg class="box" style="left:584px;top:363px" width="13" height="13"><path d="M2 2.5L5.5 6.5L2 10.5M7 2.5L10.5 6.5L7 10.5" stroke="#3b78ae" stroke-width="1.7" fill="none"/></svg>
<div class="box" style="left:484px;top:359px;width:31px;height:22px;background:#fff;border:1px solid #c3c3c3"></div>
<div class="a" style="left:484px;top:363px;width:31px;text-align:center;color:#333">1</div>
<div class="a" style="left:518px;top:363px;color:#333">из 1</div>
<div class="a" style="left:621px;top:363px;color:#333">Строки с 1 по 6 из 6</div>
<div class="box" style="left:762px;top:359px;width:46px;height:22px;background:#fff;border:1px solid #c3c3c3"></div>
<div class="a" style="left:768px;top:363px;color:#333">50</div>
<svg class="box" style="left:793px;top:367px" width="10" height="6"><path d="M0 0.5H9.5L4.75 5.5Z" fill="#000"/></svg>
<div class="box" style="left:1848px;top:359px;width:63px;height:22px;background:#fff;border:1px solid #c3c3c3;border-radius:3px"></div>
<div class="a" style="left:1853px;top:363px;color:#2566a0">Очистить</div>

<svg class="box" style="left:1652px;top:361px" width="19" height="15" viewBox="0 0 19 15">
 <defs><linearGradient id="gb" x1="0" y1="0" x2="0" y2="1"><stop offset="0" stop-color="#f2fbff"/><stop offset="1" stop-color="#bfe2f8"/></linearGradient>
 <linearGradient id="gp" x1="0" y1="0" x2="0" y2="1"><stop offset="0" stop-color="#eef9ff"/><stop offset="1" stop-color="#98d0f3"/></linearGradient></defs>
 <path d="M1.5 2.5Q1.5 1.5 3 1.5H8.5L9.5 2.5L10.5 1.5H16Q17.5 1.5 17.5 2.5V12.5H1.5Z" fill="url(#gb)" stroke="#3a3a3a" stroke-width="1.2" stroke-linejoin="round"/>
 <path d="M9.5 2.5V12.5" stroke="#3a3a3a" stroke-width="1"/>
 <path d="M3.5 4.5H7.5M3.5 6.5H7.5M3.5 8.5H6" stroke="#1e64a0" stroke-width="1"/>
 <path d="M2.3 10.5H9M10 10.5H16.8" stroke="#8cc0e6" stroke-width="1"/>
</svg>
<svg class="box" style="left:1698px;top:360px" width="14" height="16" viewBox="0 0 14 16">
 <path d="M1.5 1.5H8.2L12.5 6V14.5H1.5Z" fill="url(#gb)" stroke="#606060" stroke-width="1.1" stroke-linejoin="round"/>
 <path d="M8.2 1.8V6H12.2" fill="#fff" stroke="#777" stroke-width="0.8"/>
 <path d="M6.6 4.4V8.5Q5.6 10.4 3.6 11.6M6.6 8.5Q8.4 9.3 10.4 9.3" fill="none" stroke="#e8463c" stroke-width="1.25"/>
</svg>
<svg class="box" style="left:1727px;top:360px" width="14" height="16" viewBox="0 0 14 16">
 <path d="M1.5 1.5H8.2L12.5 6V14.5H1.5Z" fill="url(#gb)" stroke="#606060" stroke-width="1.1" stroke-linejoin="round"/>
 <path d="M8.2 1.8V6H12.2" fill="#fff" stroke="#777" stroke-width="0.8"/>
 <path d="M4.6 6.3L9.8 11.8M9.8 6.3L4.6 11.8" stroke="#2f7d4f" stroke-width="1.25"/>
</svg>
<svg class="box" style="left:1767px;top:358px" width="19" height="19" viewBox="0 0 19 19">
 <path d="M1.6 4.6H8L12.4 9V17.4H1.6Z" fill="url(#gp)" stroke="#444" stroke-width="1.1" stroke-linejoin="round"/>
 <path d="M3.2 7.6H10.9M3.2 9.6H10.9M3.2 11.6H10.9M3.2 13.4H10.9M3.2 15.4H10.9" stroke="#3a8fd0" stroke-width="0.9"/>
 <path d="M7.8 5.4L11.8 1.2V3.6H16.9V7.6H11.8V9.6Z" fill="#fafafa" stroke="#555" stroke-width="1" stroke-linejoin="round"/>
</svg>
<svg class="box" style="left:1809px;top:359px" width="18" height="18" viewBox="0 0 18 18">
 <path d="M4.5 1.5H12L13.5 3V8H4.5Z" fill="url(#gp)" stroke="#555" stroke-width="1.1" stroke-linejoin="round"/>
 <path d="M1.5 8Q1.5 6.5 3 6.5H15Q16.5 6.5 16.5 8V13.5Q16.5 14.5 15.5 14.5H2.5Q1.5 14.5 1.5 13.5Z" fill="#a6d8f6" stroke="#444" stroke-width="1.1"/>
 <rect x="4.3" y="7" width="9.4" height="3.6" fill="#2a78b8"/>
 <path d="M4.5 12H13.5V16.5H4.5Z" fill="#fff" stroke="#444" stroke-width="1.1"/>
 <rect x="5" y="12.5" width="8" height="1.6" fill="#6cc0ee"/>
</svg>
 -->
<div class="box" style="left:419px;top:354px;width:1499px;height:32px;background:#ebebeb;border-top:1px solid #a0a0a0;border-bottom:1px solid #c9c9c9"></div>
<div class="box" style="left:606px;top:355px;width:1px;height:30px;background:#cfcfcf"></div>
<div class="box" style="left:747px;top:355px;width:1px;height:30px;background:#cfcfcf"></div>
<div class="box" style="left:823px;top:355px;width:1px;height:30px;background:#cfcfcf"></div>
<div class="box" style="left:1639px;top:355px;width:1px;height:30px;background:#cfcfcf"></div>
<div class="box" style="left:1683px;top:355px;width:1px;height:30px;background:#cfcfcf"></div>
<div class="box" style="left:1752px;top:355px;width:1px;height:30px;background:#cfcfcf"></div>
<div class="box" style="left:1796px;top:355px;width:1px;height:30px;background:#cfcfcf"></div>
<div class="box" style="left:1840px;top:355px;width:1px;height:30px;background:#cfcfcf"></div>
<svg class="box" style="left:429px;top:363px" width="13" height="13"><path d="M6 2.5L2.5 6.5L6 10.5M11 2.5L7.5 6.5L11 10.5" stroke="#3b78ae" stroke-width="1.7" fill="none"/></svg>
<svg class="box" style="left:461px;top:363px" width="9" height="13"><path d="M7 2.5L3 6.5L7 10.5" stroke="#3b78ae" stroke-width="1.5" fill="none"/></svg>
<svg class="box" style="left:556px;top:363px" width="9" height="13"><path d="M2 2.5L6 6.5L2 10.5" stroke="#3b78ae" stroke-width="1.5" fill="none"/></svg>
<svg class="box" style="left:584px;top:363px" width="13" height="13"><path d="M2 2.5L5.5 6.5L2 10.5M7 2.5L10.5 6.5L7 10.5" stroke="#3b78ae" stroke-width="1.7" fill="none"/></svg>
<div class="box" style="left:484px;top:359px;width:31px;height:22px;background:#fff;border:1px solid #c3c3c3"></div>
<div class="a" style="left:484px;top:363px;width:31px;text-align:center;color:#333">1</div>
<div class="a" style="left:518px;top:363px;color:#333">из 1</div>
<div class="a" style="left:621px;top:363px;color:#333">Строки с 1 по 6 из 6</div>
<div class="box" style="left:762px;top:359px;width:46px;height:22px;background:#fff;border:1px solid #c3c3c3"></div>
<div class="a" style="left:768px;top:363px;color:#333">50</div>
<svg class="box" style="left:793px;top:367px" width="10" height="6"><path d="M0 0.5H9.5L4.75 5.5Z" fill="#000"/></svg>
<div class="box" style="left:1848px;top:359px;width:63px;height:22px;background:#fff;border:1px solid #c3c3c3;border-radius:3px"></div>
<div class="a" style="left:1853px;top:363px;color:#2566a0">Очистить</div>

<svg class="box" style="left:1652px;top:361px" width="19" height="15" viewBox="0 0 19 15">
 <defs><linearGradient id="gb" x1="0" y1="0" x2="0" y2="1"><stop offset="0" stop-color="#f2fbff"/><stop offset="1" stop-color="#bfe2f8"/></linearGradient>
 <linearGradient id="gp" x1="0" y1="0" x2="0" y2="1"><stop offset="0" stop-color="#eef9ff"/><stop offset="1" stop-color="#98d0f3"/></linearGradient></defs>
 <path d="M1.5 2.5Q1.5 1.5 3 1.5H8.5L9.5 2.5L10.5 1.5H16Q17.5 1.5 17.5 2.5V12.5H1.5Z" fill="url(#gb)" stroke="#3a3a3a" stroke-width="1.2" stroke-linejoin="round"/>
 <path d="M9.5 2.5V12.5" stroke="#3a3a3a" stroke-width="1"/>
 <path d="M3.5 4.5H7.5M3.5 6.5H7.5M3.5 8.5H6" stroke="#1e64a0" stroke-width="1"/>
 <path d="M2.3 10.5H9M10 10.5H16.8" stroke="#8cc0e6" stroke-width="1"/>
</svg>
<svg class="box" style="left:1698px;top:360px" width="14" height="16" viewBox="0 0 14 16">
 <path d="M1.5 1.5H8.2L12.5 6V14.5H1.5Z" fill="url(#gb)" stroke="#606060" stroke-width="1.1" stroke-linejoin="round"/>
 <path d="M8.2 1.8V6H12.2" fill="#fff" stroke="#777" stroke-width="0.8"/>
 <path d="M6.6 4.4V8.5Q5.6 10.4 3.6 11.6M6.6 8.5Q8.4 9.3 10.4 9.3" fill="none" stroke="#e8463c" stroke-width="1.25"/>
</svg>
<svg class="box" style="left:1727px;top:360px" width="14" height="16" viewBox="0 0 14 16">
 <path d="M1.5 1.5H8.2L12.5 6V14.5H1.5Z" fill="url(#gb)" stroke="#606060" stroke-width="1.1" stroke-linejoin="round"/>
 <path d="M8.2 1.8V6H12.2" fill="#fff" stroke="#777" stroke-width="0.8"/>
 <path d="M4.6 6.3L9.8 11.8M9.8 6.3L4.6 11.8" stroke="#2f7d4f" stroke-width="1.25"/>
</svg>
<svg class="box" style="left:1767px;top:358px" width="19" height="19" viewBox="0 0 19 19">
 <path d="M1.6 4.6H8L12.4 9V17.4H1.6Z" fill="url(#gp)" stroke="#444" stroke-width="1.1" stroke-linejoin="round"/>
 <path d="M3.2 7.6H10.9M3.2 9.6H10.9M3.2 11.6H10.9M3.2 13.4H10.9M3.2 15.4H10.9" stroke="#3a8fd0" stroke-width="0.9"/>
 <path d="M7.8 5.4L11.8 1.2V3.6H16.9V7.6H11.8V9.6Z" fill="#fafafa" stroke="#555" stroke-width="1" stroke-linejoin="round"/>
</svg>
<svg class="box" style="left:1809px;top:359px" width="18" height="18" viewBox="0 0 18 18">
 <path d="M4.5 1.5H12L13.5 3V8H4.5Z" fill="url(#gp)" stroke="#555" stroke-width="1.1" stroke-linejoin="round"/>
 <path d="M1.5 8Q1.5 6.5 3 6.5H15Q16.5 6.5 16.5 8V13.5Q16.5 14.5 15.5 14.5H2.5Q1.5 14.5 1.5 13.5Z" fill="#a6d8f6" stroke="#444" stroke-width="1.1"/>
 <rect x="4.3" y="7" width="9.4" height="3.6" fill="#2a78b8"/>
 <path d="M4.5 12H13.5V16.5H4.5Z" fill="#fff" stroke="#444" stroke-width="1.1"/>
 <rect x="5" y="12.5" width="8" height="1.6" fill="#6cc0ee"/>
</svg>


<!-- 
<div class="box" style="left:419px;top:414px;width:1499px;height:1px;background:#d3d3d3"></div>
<svg class="box" style="left:456px;top:385px" width="20" height="30"><path d="M1.5 0L16.5 14.5L1.5 29.5" stroke="#d2d2d2" stroke-width="1.3" fill="none"/></svg>
<svg class="box" style="left:557px;top:385px" width="20" height="30"><path d="M1.5 0L16.5 14.5L1.5 29.5" stroke="#d2d2d2" stroke-width="1.3" fill="none"/></svg>
<div class="a" style="left:428px;top:393px;color:#2566a0">Дата</div>
<div class="a" style="left:482px;top:393px;color:#333">Детализация</div>
CRUMB -->

<div class="box" style="left:419px;top:414px;width:1499px;height:1px;background:#d3d3d3"></div>
<svg class="box" style="left:456px;top:385px" width="20" height="30"><path d="M1.5 0L16.5 14.5L1.5 29.5" stroke="#d2d2d2" stroke-width="1.3" fill="none"/></svg>
<svg class="box" style="left:557px;top:385px" width="20" height="30"><path d="M1.5 0L16.5 14.5L1.5 29.5" stroke="#d2d2d2" stroke-width="1.3" fill="none"/></svg>
<div class="a" style="left:428px;top:393px;color:#2566a0">Дата</div>
<div class="a" style="left:482px;top:393px;color:#333">Детализация</div>


<!-- <div class="box" style="left:421px;top:416px;width:37px;height:23px;background:#f4f4f4;border-right:1px solid #d0d0d0"></div>
<div class="box" style="left:459px;top:416px;width:31px;height:23px;background:#f4f4f4;border-right:1px solid #d0d0d0"></div>
<div class="a b" style="left:464px;top:420px">№</div>
<div class="box" style="left:491px;top:416px;width:87px;height:23px;background:#f4f4f4;border-right:1px solid #d0d0d0"></div>
<div class="a b" style="left:496px;top:420px">Группировка</div>
<div class="box" style="left:579px;top:416px;width:181px;height:23px;background:#f4f4f4;border-right:1px solid #d0d0d0"></div>
<div class="a b" style="left:584px;top:420px">Пробег по всем сообщениям</div>
<div class="box" style="left:761px;top:416px;width:87px;height:23px;background:#f4f4f4;border-right:1px solid #d0d0d0"></div>
<div class="a b" style="left:766px;top:420px">Ср. скорость</div>
<div class="box" style="left:849px;top:416px;width:101px;height:23px;background:#f4f4f4;border-right:1px solid #d0d0d0"></div>
<div class="a b" style="left:854px;top:420px">Макс. скорость</div>
<div class="box" style="left:951px;top:416px;width:128px;height:23px;background:#f4f4f4;border-right:1px solid #d0d0d0"></div>
<div class="a b" style="left:956px;top:420px">Потрачено по ДАРТ</div>
<div class="box" style="left:1080px;top:416px;width:129px;height:23px;background:#f4f4f4;border-right:1px solid #d0d0d0"></div>
<div class="a b" style="left:1085px;top:420px">Ср. расход по ДАРТ</div>
<div class="box" style="left:1209px;top:415px;width:709px;height:25px;background:#f4f4f4"></div>
<div class="box" style="left:419px;top:440px;width:1499px;height:1px;background:#d3d3d3"></div>
<div class="box" style="left:421px;top:442px;width:37px;height:19px;border-right:1px solid #d0d0d0;border-bottom:1px solid #d0d0d0"></div>
<svg class="box" style="left:428px;top:447px" width="9" height="9"><rect x="0.5" y="0.5" width="8" height="8" fill="#fff" stroke="#1d6aa0" stroke-width="1"/><path d="M2 4.5H7M4.5 2V7" stroke="#333" stroke-width="1"/></svg>
<div class="box" style="left:459px;top:442px;width:31px;height:19px;border-right:1px solid #d0d0d0;border-bottom:1px solid #d0d0d0"></div>
<div class="a" style="left:464px;top:444px">1</div>
<div class="box" style="left:491px;top:442px;width:87px;height:19px;border-right:1px solid #d0d0d0;border-bottom:1px solid #d0d0d0"></div>
<div class="a" style="left:496px;top:444px">2015-08-22</div>
<div class="box" style="left:579px;top:442px;width:181px;height:19px;border-right:1px solid #d0d0d0;border-bottom:1px solid #d0d0d0"></div>
<div class="a" style="left:584px;top:444px">483.71 км</div>
<div class="box" style="left:761px;top:442px;width:87px;height:19px;border-right:1px solid #d0d0d0;border-bottom:1px solid #d0d0d0"></div>
<div class="a" style="left:766px;top:444px">20 км/ч</div>
<div class="box" style="left:849px;top:442px;width:101px;height:19px;border-right:1px solid #d0d0d0;border-bottom:1px solid #d0d0d0"></div>
<div class="a blue" style="left:854px;top:444px">104 км/ч</div>
<div class="box" style="left:951px;top:442px;width:128px;height:19px;border-right:1px solid #d0d0d0;border-bottom:1px solid #d0d0d0"></div>
<div class="a" style="left:956px;top:444px">150.00 л</div>
<div class="box" style="left:1080px;top:442px;width:129px;height:19px;border-right:1px solid #d0d0d0;border-bottom:1px solid #d0d0d0"></div>
<div class="a" style="left:1085px;top:444px">31.53 л/100 км</div>
<div class="box" style="left:421px;top:462px;width:37px;height:19px;border-right:1px solid #d0d0d0;border-bottom:1px solid #d0d0d0"></div>
<svg class="box" style="left:428px;top:467px" width="9" height="9"><rect x="0.5" y="0.5" width="8" height="8" fill="#fff" stroke="#1d6aa0" stroke-width="1"/><path d="M2 4.5H7M4.5 2V7" stroke="#333" stroke-width="1"/></svg>
<div class="box" style="left:459px;top:462px;width:31px;height:19px;border-right:1px solid #d0d0d0;border-bottom:1px solid #d0d0d0"></div>
<div class="a" style="left:464px;top:464px">2</div>
<div class="box" style="left:491px;top:462px;width:87px;height:19px;border-right:1px solid #d0d0d0;border-bottom:1px solid #d0d0d0"></div>
<div class="a" style="left:496px;top:464px">2015-08-23</div>
<div class="box" style="left:579px;top:462px;width:181px;height:19px;border-right:1px solid #d0d0d0;border-bottom:1px solid #d0d0d0"></div>
<div class="a" style="left:584px;top:464px">4.76 км</div>
<div class="box" style="left:761px;top:462px;width:87px;height:19px;border-right:1px solid #d0d0d0;border-bottom:1px solid #d0d0d0"></div>
<div class="a" style="left:766px;top:464px">0 км/ч</div>
<div class="box" style="left:849px;top:462px;width:101px;height:19px;border-right:1px solid #d0d0d0;border-bottom:1px solid #d0d0d0"></div>
<div class="a blue" style="left:854px;top:464px">17 км/ч</div>
<div class="box" style="left:951px;top:462px;width:128px;height:19px;border-right:1px solid #d0d0d0;border-bottom:1px solid #d0d0d0"></div>
<div class="a" style="left:956px;top:464px">4.00 л</div>
<div class="box" style="left:1080px;top:462px;width:129px;height:19px;border-right:1px solid #d0d0d0;border-bottom:1px solid #d0d0d0"></div>
<div class="a" style="left:1085px;top:464px">35.31 л/100 км</div>
<div class="box" style="left:421px;top:482px;width:37px;height:19px;border-right:1px solid #d0d0d0;border-bottom:1px solid #d0d0d0"></div>
<svg class="box" style="left:428px;top:487px" width="9" height="9"><rect x="0.5" y="0.5" width="8" height="8" fill="#fff" stroke="#1d6aa0" stroke-width="1"/><path d="M2 4.5H7M4.5 2V7" stroke="#333" stroke-width="1"/></svg>
<div class="box" style="left:459px;top:482px;width:31px;height:19px;border-right:1px solid #d0d0d0;border-bottom:1px solid #d0d0d0"></div>
<div class="a" style="left:464px;top:484px">3</div>
<div class="box" style="left:491px;top:482px;width:87px;height:19px;border-right:1px solid #d0d0d0;border-bottom:1px solid #d0d0d0"></div>
<div class="a" style="left:496px;top:484px">2015-08-24</div>
<div class="box" style="left:579px;top:482px;width:181px;height:19px;border-right:1px solid #d0d0d0;border-bottom:1px solid #d0d0d0"></div>
<div class="a" style="left:584px;top:484px">550.27 км</div>
<div class="box" style="left:761px;top:482px;width:87px;height:19px;border-right:1px solid #d0d0d0;border-bottom:1px solid #d0d0d0"></div>
<div class="a" style="left:766px;top:484px">23 км/ч</div>
<div class="box" style="left:849px;top:482px;width:101px;height:19px;border-right:1px solid #d0d0d0;border-bottom:1px solid #d0d0d0"></div>
<div class="a blue" style="left:854px;top:484px">102 км/ч</div>
<div class="box" style="left:951px;top:482px;width:128px;height:19px;border-right:1px solid #d0d0d0;border-bottom:1px solid #d0d0d0"></div>
<div class="a" style="left:956px;top:484px">192.00 л</div>
<div class="box" style="left:1080px;top:482px;width:129px;height:19px;border-right:1px solid #d0d0d0;border-bottom:1px solid #d0d0d0"></div>
<div class="a" style="left:1085px;top:484px">35.36 л/100 км</div>
<div class="box" style="left:421px;top:502px;width:37px;height:19px;border-right:1px solid #d0d0d0;border-bottom:1px solid #d0d0d0"></div>
<svg class="box" style="left:428px;top:507px" width="9" height="9"><rect x="0.5" y="0.5" width="8" height="8" fill="#fff" stroke="#1d6aa0" stroke-width="1"/><path d="M2 4.5H7M4.5 2V7" stroke="#333" stroke-width="1"/></svg>
<div class="box" style="left:459px;top:502px;width:31px;height:19px;border-right:1px solid #d0d0d0;border-bottom:1px solid #d0d0d0"></div>
<div class="a" style="left:464px;top:504px">4</div>
<div class="box" style="left:491px;top:502px;width:87px;height:19px;border-right:1px solid #d0d0d0;border-bottom:1px solid #d0d0d0"></div>
<div class="a" style="left:496px;top:504px">2015-08-25</div>
<div class="box" style="left:579px;top:502px;width:181px;height:19px;border-right:1px solid #d0d0d0;border-bottom:1px solid #d0d0d0"></div>
<div class="a" style="left:584px;top:504px">63.47 км</div>
<div class="box" style="left:761px;top:502px;width:87px;height:19px;border-right:1px solid #d0d0d0;border-bottom:1px solid #d0d0d0"></div>
<div class="a" style="left:766px;top:504px">3 км/ч</div>
<div class="box" style="left:849px;top:502px;width:101px;height:19px;border-right:1px solid #d0d0d0;border-bottom:1px solid #d0d0d0"></div>
<div class="a blue" style="left:854px;top:504px">93 км/ч</div>
<div class="box" style="left:951px;top:502px;width:128px;height:19px;border-right:1px solid #d0d0d0;border-bottom:1px solid #d0d0d0"></div>
<div class="a" style="left:956px;top:504px">25.00 л</div>
<div class="box" style="left:1080px;top:502px;width:129px;height:19px;border-right:1px solid #d0d0d0;border-bottom:1px solid #d0d0d0"></div>
<div class="a" style="left:1085px;top:504px">40.54 л/100 км</div>
<div class="box" style="left:421px;top:522px;width:37px;height:19px;border-right:1px solid #d0d0d0;border-bottom:1px solid #d0d0d0"></div>
<svg class="box" style="left:428px;top:527px" width="9" height="9"><rect x="0.5" y="0.5" width="8" height="8" fill="#fff" stroke="#1d6aa0" stroke-width="1"/><path d="M2 4.5H7M4.5 2V7" stroke="#333" stroke-width="1"/></svg>
<div class="box" style="left:459px;top:522px;width:31px;height:19px;border-right:1px solid #d0d0d0;border-bottom:1px solid #d0d0d0"></div>
<div class="a" style="left:464px;top:524px">5</div>
<div class="box" style="left:491px;top:522px;width:87px;height:19px;border-right:1px solid #d0d0d0;border-bottom:1px solid #d0d0d0"></div>
<div class="a" style="left:496px;top:524px">2015-08-26</div>
<div class="box" style="left:579px;top:522px;width:181px;height:19px;border-right:1px solid #d0d0d0;border-bottom:1px solid #d0d0d0"></div>
<div class="a" style="left:584px;top:524px">10.54 км</div>
<div class="box" style="left:761px;top:522px;width:87px;height:19px;border-right:1px solid #d0d0d0;border-bottom:1px solid #d0d0d0"></div>
<div class="a" style="left:766px;top:524px">0 км/ч</div>
<div class="box" style="left:849px;top:522px;width:101px;height:19px;border-right:1px solid #d0d0d0;border-bottom:1px solid #d0d0d0"></div>
<div class="a blue" style="left:854px;top:524px">82 км/ч</div>
<div class="box" style="left:951px;top:522px;width:128px;height:19px;border-right:1px solid #d0d0d0;border-bottom:1px solid #d0d0d0"></div>
<div class="a" style="left:956px;top:524px">5.00 л</div>
<div class="box" style="left:1080px;top:522px;width:129px;height:19px;border-right:1px solid #d0d0d0;border-bottom:1px solid #d0d0d0"></div>
<div class="a" style="left:1085px;top:524px">54.51 л/100 км</div>
<div class="box" style="left:421px;top:542px;width:37px;height:19px;border-right:1px solid #d0d0d0;border-bottom:1px solid #d0d0d0"></div>
<svg class="box" style="left:428px;top:547px" width="9" height="9"><rect x="0.5" y="0.5" width="8" height="8" fill="#fff" stroke="#1d6aa0" stroke-width="1"/><path d="M2 4.5H7M4.5 2V7" stroke="#333" stroke-width="1"/></svg>
<div class="box" style="left:459px;top:542px;width:31px;height:19px;border-right:1px solid #d0d0d0;border-bottom:1px solid #d0d0d0"></div>
<div class="a" style="left:464px;top:544px">6</div>
<div class="box" style="left:491px;top:542px;width:87px;height:19px;border-right:1px solid #d0d0d0;border-bottom:1px solid #d0d0d0"></div>
<div class="a" style="left:496px;top:544px">2015-08-27</div>
<div class="box" style="left:579px;top:542px;width:181px;height:19px;border-right:1px solid #d0d0d0;border-bottom:1px solid #d0d0d0"></div>
<div class="a" style="left:584px;top:544px">1.38 км</div>
<div class="box" style="left:761px;top:542px;width:87px;height:19px;border-right:1px solid #d0d0d0;border-bottom:1px solid #d0d0d0"></div>
<div class="a" style="left:766px;top:544px">0 км/ч</div>
<div class="box" style="left:849px;top:542px;width:101px;height:19px;border-right:1px solid #d0d0d0;border-bottom:1px solid #d0d0d0"></div>
<div class="a blue" style="left:854px;top:544px">18 км/ч</div>
<div class="box" style="left:951px;top:542px;width:128px;height:19px;border-right:1px solid #d0d0d0;border-bottom:1px solid #d0d0d0"></div>
<div class="a" style="left:956px;top:544px">1.50 л</div>
<div class="box" style="left:1080px;top:542px;width:129px;height:19px;border-right:1px solid #d0d0d0;border-bottom:1px solid #d0d0d0"></div>
<div class="a" style="left:1085px;top:544px">108.48 л/100 км</div>
<div class="box" style="left:419px;top:781px;width:1499px;height:1px;background:#d3d3d3"></div>
<div class="box" style="left:421px;top:783px;width:37px;height:30px;background:#f4f4f4;border-right:1px solid #d0d0d0;"></div>
<div class="box" style="left:459px;top:783px;width:31px;height:30px;background:#f4f4f4;border-right:1px solid #d0d0d0;"></div>
<div class="a b" style="left:464px;top:787px">-----</div>
<div class="box" style="left:491px;top:783px;width:87px;height:30px;background:#f4f4f4;border-right:1px solid #d0d0d0;"></div>
<div class="a b" style="left:496px;top:787px">Итого</div>
<div class="box" style="left:579px;top:783px;width:181px;height:30px;background:#f4f4f4;border-right:1px solid #d0d0d0;"></div>
<div class="a b" style="left:584px;top:787px">1114.14 км</div>
<div class="box" style="left:761px;top:783px;width:87px;height:30px;background:#f4f4f4;border-right:1px solid #d0d0d0;"></div>
<div class="a b" style="left:766px;top:787px">8 км/ч</div>
<div class="box" style="left:849px;top:783px;width:101px;height:30px;background:#f4f4f4;border-right:1px solid #d0d0d0;"></div>
<div class="a b" style="left:854px;top:787px">104 км/ч</div>
<div class="box" style="left:951px;top:783px;width:128px;height:30px;background:#f4f4f4;border-right:1px solid #d0d0d0;"></div>
<div class="a b" style="left:956px;top:787px">377.50 л</div>
<div class="box" style="left:1080px;top:783px;width:129px;height:30px;background:#f4f4f4;border-right:1px solid #d0d0d0;"></div>
<div class="a b" style="left:1085px;top:787px">34.68 л/100 км</div>
<div class="box" style="left:1210px;top:783px;width:707px;height:30px;background:#f4f4f4;"></div> -->
<div class="box" style="left:421px;top:416px;width:37px;height:23px;background:#f4f4f4;border-right:1px solid #d0d0d0"></div>
<div class="box" style="left:459px;top:416px;width:31px;height:23px;background:#f4f4f4;border-right:1px solid #d0d0d0"></div>
<div class="a b" style="left:464px;top:420px">№</div>
<div class="box" style="left:491px;top:416px;width:87px;height:23px;background:#f4f4f4;border-right:1px solid #d0d0d0"></div>
<div class="a b" style="left:496px;top:420px">Группировка</div>
<div class="box" style="left:579px;top:416px;width:181px;height:23px;background:#f4f4f4;border-right:1px solid #d0d0d0"></div>
<div class="a b" style="left:584px;top:420px">Пробег по всем сообщениям</div>
<div class="box" style="left:761px;top:416px;width:87px;height:23px;background:#f4f4f4;border-right:1px solid #d0d0d0"></div>
<div class="a b" style="left:766px;top:420px">Ср. скорость</div>
<div class="box" style="left:849px;top:416px;width:101px;height:23px;background:#f4f4f4;border-right:1px solid #d0d0d0"></div>
<div class="a b" style="left:854px;top:420px">Макс. скорость</div>
<div class="box" style="left:951px;top:416px;width:128px;height:23px;background:#f4f4f4;border-right:1px solid #d0d0d0"></div>
<div class="a b" style="left:956px;top:420px">Потрачено по ДАРТ</div>
<div class="box" style="left:1080px;top:416px;width:129px;height:23px;background:#f4f4f4;border-right:1px solid #d0d0d0"></div>
<div class="a b" style="left:1085px;top:420px">Ср. расход по ДАРТ</div>
<div class="box" style="left:1209px;top:415px;width:709px;height:25px;background:#f4f4f4"></div>
<div class="box" style="left:419px;top:440px;width:1499px;height:1px;background:#d3d3d3"></div>
<div class="box" style="left:421px;top:442px;width:37px;height:19px;border-right:1px solid #d0d0d0;border-bottom:1px solid #d0d0d0"></div>
<svg class="box" style="left:428px;top:447px" width="9" height="9"><rect x="0.5" y="0.5" width="8" height="8" fill="#fff" stroke="#1d6aa0" stroke-width="1"/><path d="M2 4.5H7M4.5 2V7" stroke="#333" stroke-width="1"/></svg>
<div class="box" style="left:459px;top:442px;width:31px;height:19px;border-right:1px solid #d0d0d0;border-bottom:1px solid #d0d0d0"></div>
<div class="a" style="left:464px;top:444px">1</div>
<div class="box" style="left:491px;top:442px;width:87px;height:19px;border-right:1px solid #d0d0d0;border-bottom:1px solid #d0d0d0"></div>
<div class="a" style="left:496px;top:444px">2015-08-22</div>
<div class="box" style="left:579px;top:442px;width:181px;height:19px;border-right:1px solid #d0d0d0;border-bottom:1px solid #d0d0d0"></div>
<div class="a" style="left:584px;top:444px">483.71 км</div>
<div class="box" style="left:761px;top:442px;width:87px;height:19px;border-right:1px solid #d0d0d0;border-bottom:1px solid #d0d0d0"></div>
<div class="a" style="left:766px;top:444px">20 км/ч</div>
<div class="box" style="left:849px;top:442px;width:101px;height:19px;border-right:1px solid #d0d0d0;border-bottom:1px solid #d0d0d0"></div>
<div class="a blue" style="left:854px;top:444px">104 км/ч</div>
<div class="box" style="left:951px;top:442px;width:128px;height:19px;border-right:1px solid #d0d0d0;border-bottom:1px solid #d0d0d0"></div>
<div class="a" style="left:956px;top:444px">150.00 л</div>
<div class="box" style="left:1080px;top:442px;width:129px;height:19px;border-right:1px solid #d0d0d0;border-bottom:1px solid #d0d0d0"></div>
<div class="a" style="left:1085px;top:444px">31.53 л/100 км</div>
<div class="box" style="left:421px;top:462px;width:37px;height:19px;border-right:1px solid #d0d0d0;border-bottom:1px solid #d0d0d0"></div>
<svg class="box" style="left:428px;top:467px" width="9" height="9"><rect x="0.5" y="0.5" width="8" height="8" fill="#fff" stroke="#1d6aa0" stroke-width="1"/><path d="M2 4.5H7M4.5 2V7" stroke="#333" stroke-width="1"/></svg>
<div class="box" style="left:459px;top:462px;width:31px;height:19px;border-right:1px solid #d0d0d0;border-bottom:1px solid #d0d0d0"></div>
<div class="a" style="left:464px;top:464px">2</div>
<div class="box" style="left:491px;top:462px;width:87px;height:19px;border-right:1px solid #d0d0d0;border-bottom:1px solid #d0d0d0"></div>
<div class="a" style="left:496px;top:464px">2015-08-23</div>
<div class="box" style="left:579px;top:462px;width:181px;height:19px;border-right:1px solid #d0d0d0;border-bottom:1px solid #d0d0d0"></div>
<div class="a" style="left:584px;top:464px">4.76 км</div>
<div class="box" style="left:761px;top:462px;width:87px;height:19px;border-right:1px solid #d0d0d0;border-bottom:1px solid #d0d0d0"></div>
<div class="a" style="left:766px;top:464px">0 км/ч</div>
<div class="box" style="left:849px;top:462px;width:101px;height:19px;border-right:1px solid #d0d0d0;border-bottom:1px solid #d0d0d0"></div>
<div class="a blue" style="left:854px;top:464px">17 км/ч</div>
<div class="box" style="left:951px;top:462px;width:128px;height:19px;border-right:1px solid #d0d0d0;border-bottom:1px solid #d0d0d0"></div>
<div class="a" style="left:956px;top:464px">4.00 л</div>
<div class="box" style="left:1080px;top:462px;width:129px;height:19px;border-right:1px solid #d0d0d0;border-bottom:1px solid #d0d0d0"></div>
<div class="a" style="left:1085px;top:464px">35.31 л/100 км</div>
<div class="box" style="left:421px;top:482px;width:37px;height:19px;border-right:1px solid #d0d0d0;border-bottom:1px solid #d0d0d0"></div>
<svg class="box" style="left:428px;top:487px" width="9" height="9"><rect x="0.5" y="0.5" width="8" height="8" fill="#fff" stroke="#1d6aa0" stroke-width="1"/><path d="M2 4.5H7M4.5 2V7" stroke="#333" stroke-width="1"/></svg>
<div class="box" style="left:459px;top:482px;width:31px;height:19px;border-right:1px solid #d0d0d0;border-bottom:1px solid #d0d0d0"></div>
<div class="a" style="left:464px;top:484px">3</div>
<div class="box" style="left:491px;top:482px;width:87px;height:19px;border-right:1px solid #d0d0d0;border-bottom:1px solid #d0d0d0"></div>
<div class="a" style="left:496px;top:484px">2015-08-24</div>
<div class="box" style="left:579px;top:482px;width:181px;height:19px;border-right:1px solid #d0d0d0;border-bottom:1px solid #d0d0d0"></div>
<div class="a" style="left:584px;top:484px">550.27 км</div>
<div class="box" style="left:761px;top:482px;width:87px;height:19px;border-right:1px solid #d0d0d0;border-bottom:1px solid #d0d0d0"></div>
<div class="a" style="left:766px;top:484px">23 км/ч</div>
<div class="box" style="left:849px;top:482px;width:101px;height:19px;border-right:1px solid #d0d0d0;border-bottom:1px solid #d0d0d0"></div>
<div class="a blue" style="left:854px;top:484px">102 км/ч</div>
<div class="box" style="left:951px;top:482px;width:128px;height:19px;border-right:1px solid #d0d0d0;border-bottom:1px solid #d0d0d0"></div>
<div class="a" style="left:956px;top:484px">192.00 л</div>
<div class="box" style="left:1080px;top:482px;width:129px;height:19px;border-right:1px solid #d0d0d0;border-bottom:1px solid #d0d0d0"></div>
<div class="a" style="left:1085px;top:484px">35.36 л/100 км</div>
<div class="box" style="left:421px;top:502px;width:37px;height:19px;border-right:1px solid #d0d0d0;border-bottom:1px solid #d0d0d0"></div>
<svg class="box" style="left:428px;top:507px" width="9" height="9"><rect x="0.5" y="0.5" width="8" height="8" fill="#fff" stroke="#1d6aa0" stroke-width="1"/><path d="M2 4.5H7M4.5 2V7" stroke="#333" stroke-width="1"/></svg>
<div class="box" style="left:459px;top:502px;width:31px;height:19px;border-right:1px solid #d0d0d0;border-bottom:1px solid #d0d0d0"></div>
<div class="a" style="left:464px;top:504px">4</div>
<div class="box" style="left:491px;top:502px;width:87px;height:19px;border-right:1px solid #d0d0d0;border-bottom:1px solid #d0d0d0"></div>
<div class="a" style="left:496px;top:504px">2015-08-25</div>
<div class="box" style="left:579px;top:502px;width:181px;height:19px;border-right:1px solid #d0d0d0;border-bottom:1px solid #d0d0d0"></div>
<div class="a" style="left:584px;top:504px">63.47 км</div>
<div class="box" style="left:761px;top:502px;width:87px;height:19px;border-right:1px solid #d0d0d0;border-bottom:1px solid #d0d0d0"></div>
<div class="a" style="left:766px;top:504px">3 км/ч</div>
<div class="box" style="left:849px;top:502px;width:101px;height:19px;border-right:1px solid #d0d0d0;border-bottom:1px solid #d0d0d0"></div>
<div class="a blue" style="left:854px;top:504px">93 км/ч</div>
<div class="box" style="left:951px;top:502px;width:128px;height:19px;border-right:1px solid #d0d0d0;border-bottom:1px solid #d0d0d0"></div>
<div class="a" style="left:956px;top:504px">25.00 л</div>
<div class="box" style="left:1080px;top:502px;width:129px;height:19px;border-right:1px solid #d0d0d0;border-bottom:1px solid #d0d0d0"></div>
<div class="a" style="left:1085px;top:504px">40.54 л/100 км</div>
<div class="box" style="left:421px;top:522px;width:37px;height:19px;border-right:1px solid #d0d0d0;border-bottom:1px solid #d0d0d0"></div>
<svg class="box" style="left:428px;top:527px" width="9" height="9"><rect x="0.5" y="0.5" width="8" height="8" fill="#fff" stroke="#1d6aa0" stroke-width="1"/><path d="M2 4.5H7M4.5 2V7" stroke="#333" stroke-width="1"/></svg>
<div class="box" style="left:459px;top:522px;width:31px;height:19px;border-right:1px solid #d0d0d0;border-bottom:1px solid #d0d0d0"></div>
<div class="a" style="left:464px;top:524px">5</div>
<div class="box" style="left:491px;top:522px;width:87px;height:19px;border-right:1px solid #d0d0d0;border-bottom:1px solid #d0d0d0"></div>
<div class="a" style="left:496px;top:524px">2015-08-26</div>
<div class="box" style="left:579px;top:522px;width:181px;height:19px;border-right:1px solid #d0d0d0;border-bottom:1px solid #d0d0d0"></div>
<div class="a" style="left:584px;top:524px">10.54 км</div>
<div class="box" style="left:761px;top:522px;width:87px;height:19px;border-right:1px solid #d0d0d0;border-bottom:1px solid #d0d0d0"></div>
<div class="a" style="left:766px;top:524px">0 км/ч</div>
<div class="box" style="left:849px;top:522px;width:101px;height:19px;border-right:1px solid #d0d0d0;border-bottom:1px solid #d0d0d0"></div>
<div class="a blue" style="left:854px;top:524px">82 км/ч</div>
<div class="box" style="left:951px;top:522px;width:128px;height:19px;border-right:1px solid #d0d0d0;border-bottom:1px solid #d0d0d0"></div>
<div class="a" style="left:956px;top:524px">5.00 л</div>
<div class="box" style="left:1080px;top:522px;width:129px;height:19px;border-right:1px solid #d0d0d0;border-bottom:1px solid #d0d0d0"></div>
<div class="a" style="left:1085px;top:524px">54.51 л/100 км</div>
<div class="box" style="left:421px;top:542px;width:37px;height:19px;border-right:1px solid #d0d0d0;border-bottom:1px solid #d0d0d0"></div>
<svg class="box" style="left:428px;top:547px" width="9" height="9"><rect x="0.5" y="0.5" width="8" height="8" fill="#fff" stroke="#1d6aa0" stroke-width="1"/><path d="M2 4.5H7M4.5 2V7" stroke="#333" stroke-width="1"/></svg>
<div class="box" style="left:459px;top:542px;width:31px;height:19px;border-right:1px solid #d0d0d0;border-bottom:1px solid #d0d0d0"></div>
<div class="a" style="left:464px;top:544px">6</div>
<div class="box" style="left:491px;top:542px;width:87px;height:19px;border-right:1px solid #d0d0d0;border-bottom:1px solid #d0d0d0"></div>
<div class="a" style="left:496px;top:544px">2015-08-27</div>
<div class="box" style="left:579px;top:542px;width:181px;height:19px;border-right:1px solid #d0d0d0;border-bottom:1px solid #d0d0d0"></div>
<div class="a" style="left:584px;top:544px">1.38 км</div>
<div class="box" style="left:761px;top:542px;width:87px;height:19px;border-right:1px solid #d0d0d0;border-bottom:1px solid #d0d0d0"></div>
<div class="a" style="left:766px;top:544px">0 км/ч</div>
<div class="box" style="left:849px;top:542px;width:101px;height:19px;border-right:1px solid #d0d0d0;border-bottom:1px solid #d0d0d0"></div>
<div class="a blue" style="left:854px;top:544px">18 км/ч</div>
<div class="box" style="left:951px;top:542px;width:128px;height:19px;border-right:1px solid #d0d0d0;border-bottom:1px solid #d0d0d0"></div>
<div class="a" style="left:956px;top:544px">1.50 л</div>
<div class="box" style="left:1080px;top:542px;width:129px;height:19px;border-right:1px solid #d0d0d0;border-bottom:1px solid #d0d0d0"></div>
<div class="a" style="left:1085px;top:544px">108.48 л/100 км</div>
<div class="box" style="left:419px;top:781px;width:1499px;height:1px;background:#d3d3d3"></div>
<div class="box" style="left:421px;top:783px;width:37px;height:30px;background:#f4f4f4;border-right:1px solid #d0d0d0;"></div>
<div class="box" style="left:459px;top:783px;width:31px;height:30px;background:#f4f4f4;border-right:1px solid #d0d0d0;"></div>
<div class="a b" style="left:464px;top:787px">-----</div>
<div class="box" style="left:491px;top:783px;width:87px;height:30px;background:#f4f4f4;border-right:1px solid #d0d0d0;"></div>
<div class="a b" style="left:496px;top:787px">Итого</div>
<div class="box" style="left:579px;top:783px;width:181px;height:30px;background:#f4f4f4;border-right:1px solid #d0d0d0;"></div>
<div class="a b" style="left:584px;top:787px">1114.14 км</div>
<div class="box" style="left:761px;top:783px;width:87px;height:30px;background:#f4f4f4;border-right:1px solid #d0d0d0;"></div>
<div class="a b" style="left:766px;top:787px">8 км/ч</div>
<div class="box" style="left:849px;top:783px;width:101px;height:30px;background:#f4f4f4;border-right:1px solid #d0d0d0;"></div>
<div class="a b" style="left:854px;top:787px">104 км/ч</div>
<div class="box" style="left:951px;top:783px;width:128px;height:30px;background:#f4f4f4;border-right:1px solid #d0d0d0;"></div>
<div class="a b" style="left:956px;top:787px">377.50 л</div>
<div class="box" style="left:1080px;top:783px;width:129px;height:30px;background:#f4f4f4;border-right:1px solid #d0d0d0;"></div>
<div class="a b" style="left:1085px;top:787px">34.68 л/100 км</div>
<div class="box" style="left:1210px;top:783px;width:707px;height:30px;background:#f4f4f4;"></div>
</body></html>
